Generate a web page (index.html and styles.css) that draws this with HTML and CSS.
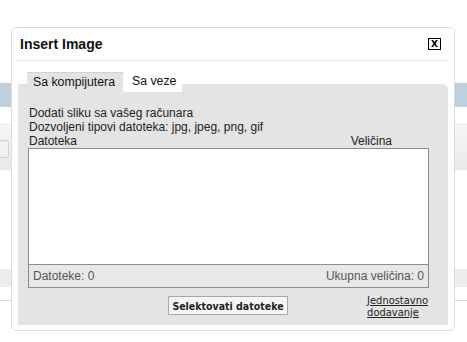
FILE: index.html
```html
<!DOCTYPE html>
<html lang="en">
  <head>
    <meta charset="UTF-8" />
    <title>Insert Image</title>
    <link rel="stylesheet" href="styles.css">
  </head>
  <body>
    <!-- Page behind the dialog -->
    <div class="page">
      <div class="page-top"></div>
      <div class="page-band"></div>
      <div class="page-gap"></div>
      <div class="page-toolbar"><span class="page-select"></span></div>
      <div class="page-body"></div>
      <div class="page-row"></div>
      <div class="page-gap-small"></div>
      <div class="page-line"></div>
    </div>

    <!-- Insert Image dialog -->
    <div class="dialog">
      <div class="dialog-header">
        <span class="dialog-title">Insert Image</span>
        <span class="dialog-close">X</span>
      </div>
      <div class="dialog-sep"></div>

      <div class="tabs">
        <span class="tab active">Sa kompijutera</span>
        <span class="tab">Sa veze</span>
      </div>
      <div class="panel">
        <div class="line">Dodati sliku sa vašeg računara</div>
        <div class="line">Dozvoljeni tipovi datoteka: jpg, jpeg, png, gif</div>
        <div class="columns">
          <span>Datoteka</span>
          <span>Veličina</span>
        </div>
        <div class="filebox">
          <div class="filelist"></div>
          <div class="filefoot">
            <span>Datoteke: 0</span>
            <span>Ukupna veličina: 0</span>
          </div>
        </div>
        <div class="actions">
          <button class="select-btn">Selektovati datoteke</button>
          <a class="simple-link" href="#">Jednostavno<br />dodavanje</a>
        </div>
      </div>
    </div>
  </body>
</html>
```

FILE: styles.css
```css
* {
  box-sizing: border-box;
}
html,
body {
  margin: 0;
  padding: 0;
  height: 100%;
  font-family: "Liberation Sans", Arial, sans-serif;
  font-size: 12px;
  color: #222;
  background-color: #fff;
  overflow: hidden;
}

/* Page behind */
.page-top {
  height: 83px;
}
.page-band {
  height: 24px;
  background-color: #bccfdc;
}
.page-gap {
  height: 18px;
  border-bottom: 1px solid #e6e6e6;
}
.page-toolbar {
  height: 45px;
  background: linear-gradient(#f6f6f6, #e8e8e8);
  padding-top: 15px;
}
.page-select {
  display: block;
  width: 9px;
  height: 18px;
  border: 1px solid #d0d0d0;
  border-left: none;
  border-radius: 0 3px 3px 0;
  background: #f2f2f2;
}
.page-body {
  height: 99px;
}
.page-row {
  height: 18px;
  background-color: #ececec;
}
.page-gap-small {
  height: 13px;
}
.page-line {
  border-top: 1px solid #dedede;
}

/* Dialog */
.dialog {
  position: absolute;
  left: 11px;
  top: 27px;
  width: 444px;
  height: 304px;
  background-color: #fff;
  border: 1px solid #dcdcdc;
  border-radius: 5px;
  display: flex;
  flex-direction: column;
}
.dialog-header {
  display: flex;
  justify-content: space-between;
  align-items: center;
  padding: 8px 13px 8px 8px;
  height: 32px;
}
.dialog-title {
  font-size: 14px;
  font-weight: bold;
  color: #111;
}
.dialog-close {
  width: 13px;
  height: 12px;
  border: 1px solid #000;
  font-family: "DejaVu Sans", sans-serif;
  font-size: 9px;
  font-weight: bold;
  line-height: 10px;
  text-align: center;
  color: #000;
}
.dialog-sep {
  margin: 0 5px;
  border-top: 1px solid #e6e6e6;
}

/* Tabs */
.tabs {
  display: flex;
  margin: 11px 0 -8px 15px;
  position: relative;
  z-index: 1;
}
.tab {
  height: 20px;
  line-height: 19px;
  padding: 0 5px 0 9px;
  width: 59px;
  font-size: 12.3px;
  color: #111;
  background-color: #fff;
}
.tab.active {
  background-color: #e4e4e4;
  border-top: 1px solid #d2d2d2;
  padding-left: 6px;
  width: 96px;
}

/* Panel */
.panel {
  flex: 1;
  margin: 0 6px 5px 6px;
  background-color: #e4e4e4;
  border-radius: 0 5px 0 0;
  padding: 22px 19px 0 10px;
}
.line {
  line-height: 14px;
  padding-left: 1px;
}
.columns {
  display: flex;
  justify-content: space-between;
  line-height: 14px;
  padding: 0 37px 0 1px;
}
.filebox {
  border: 1px solid #8c8c8c;
  background-color: #fff;
}
.filelist {
  height: 115px;
}
.filefoot {
  display: flex;
  justify-content: space-between;
  height: 23px;
  line-height: 22px;
  padding: 0 4px;
  border-top: 1px solid #8c8c8c;
  background-color: #e8e8e8;
  color: #555;
}
.actions {
  display: flex;
  align-items: flex-start;
  justify-content: space-between;
  padding: 7px 0 0 140px;
}
.select-btn {
  margin-top: 1px;
  width: 120px;
  height: 19px;
  padding: 0;
  border: 1px solid #a8a8a8;
  background-color: #f5f5f5;
  font-family: "DejaVu Sans Condensed", "DejaVu Sans", sans-serif;
  font-size: 10.5px;
  font-weight: bold;
  color: #222;
}
.simple-link {
  font-family: "DejaVu Sans Condensed", "DejaVu Sans", sans-serif;
  font-size: 11px;
  line-height: 12px;
  color: #222;
  padding-right: 1px;
}
```
